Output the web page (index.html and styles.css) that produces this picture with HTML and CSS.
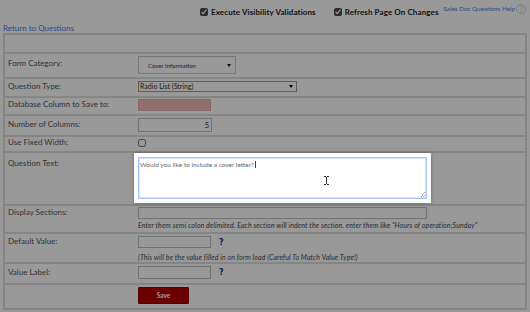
FILE: index.html
```html
<!DOCTYPE html>
<html lang="en">
<head>
<meta charset="utf-8">
<title>Edit Question</title>
<link rel="stylesheet" href="styles.css">
</head>
<body>
<div class="topbar">
  <label class="opt opt-exec"><input class="tick" type="checkbox" checked><span>Execute Visibility Validations</span></label>
  <label class="opt opt-refresh"><input class="tick" type="checkbox" checked><span>Refresh Page On Changes</span></label>
  <a class="help-link" href="#">Sales Doc Questions Help</a>
  <span class="help-icon">?</span>
</div>
<a class="back" href="#">Return to Questions</a>
<div class="form">
  <div class="row head"></div>
  <div class="row r-cat">
    <div class="lbl">Form Category:</div>
    <div class="ctl"><span class="sel sel-cat"><select><option>Cover Information</option></select></span></div>
  </div>
  <div class="row r-type">
    <div class="lbl">Question Type:</div>
    <div class="ctl"><span class="sel sel-type"><select><option>Radio List (String)</option></select></span></div>
  </div>
  <div class="row r-db">
    <div class="lbl">Database Column to Save to:</div>
    <div class="ctl"><input class="inp inp-sm inp-req" type="text"></div>
  </div>
  <div class="row r-num">
    <div class="lbl">Number of Columns:</div>
    <div class="ctl"><input class="inp inp-sm inp-num" type="text" value="5"></div>
  </div>
  <div class="row r-fixed">
    <div class="lbl">Use Fixed Width:</div>
    <div class="ctl"><input class="cb" type="checkbox"></div>
  </div>
  <div class="row r-text">
    <div class="lbl">Question Text:</div>
    <div class="ctl">
      <div class="spot">
        <div class="ta">Would you like to include a cover letter?<span class="caret"></span><svg class="ibeam" width="5" height="9" viewBox="0 0 5 9"><path d="M0 0.5H2M3 0.5H5M2.5 1V8M0 8.5H2M3 8.5H5" stroke="#333" stroke-width="1" fill="none"/></svg></div>
      </div>
    </div>
  </div>
  <div class="row r-disp">
    <div class="lbl">Display Sections:</div>
    <div class="ctl"><input class="inp inp-wide" type="text"></div>
    <div class="note">Enter them semi colon delimited. Each section will indent the section. enter them like "Hours of operation;Sunday"</div>
  </div>
  <div class="row r-def">
    <div class="lbl">Default Value:</div>
    <div class="ctl"><input class="inp inp-sm" type="text"><span class="q">?</span></div>
    <div class="note">(This will be the value filled in on form load (Careful To Match Value Type!)</div>
  </div>
  <div class="row r-lab">
    <div class="lbl">Value Label:</div>
    <div class="ctl"><input class="inp inp-sm inp-tall" type="text"><span class="q">?</span></div>
  </div>
  <div class="row r-save">
    <div class="lbl"></div>
    <div class="ctl"><button class="btn" type="button">Save</button></div>
  </div>
</div>
</body>
</html>
```

FILE: styles.css
```css
* { box-sizing: border-box; }
html, body { margin: 0; padding: 0; }
body {
  width: 530px;
  height: 312px;
  overflow: hidden;
  background: #fff;
  font-family: Lato, "Open Sans", sans-serif;
  color: #555;
}

/* top bar */
.topbar {
  display: flex;
  justify-content: flex-end;
  align-items: center;
  height: 24px;
  padding-right: 4px;
}
.opt {
  display: flex;
  align-items: center;
  gap: 3px;
  font-size: 8px;
  font-weight: 700;
  letter-spacing: 0.1px;
  color: #222;
}
.opt-exec { margin-right: 18px; }
.opt-refresh { margin-right: 5px; }
.tick {
  width: 8px;
  height: 8px;
  margin: 0;
  accent-color: #4a4a4a;
}
.help-link {
  align-self: flex-start;
  margin-top: 5px;
  font-size: 6.3px;
  line-height: 8px;
  color: #4f7cf0;
  text-decoration: none;
  white-space: nowrap;
}
.help-icon {
  align-self: flex-start;
  margin-top: 4px;
  margin-left: 1px;
  width: 10px;
  height: 10px;
  border: 1px solid #cfcfcf;
  border-radius: 50%;
  color: #cfcfcf;
  font-size: 7px;
  font-weight: 700;
  line-height: 8px;
  text-align: center;
}
.back {
  display: block;
  margin: 0 0 1px 3px;
  font-size: 8px;
  line-height: 8px;
  height: 8px;
  color: #4f7cf0;
  text-decoration: none;
}

/* form table */
.form {
  margin: 0 3px;
  border: 2px solid #dedede;
  border-top: 0;
}
.row {
  display: grid;
  grid-template-columns: 133px 1fr;
  align-items: center;
  border-top: 2px solid #dedede;
}
.head { height: 19px; }
.lbl {
  padding-left: 3px;
  padding-bottom: 2px;
  font-size: 8px;
  line-height: 8px;
  color: #555;
  white-space: nowrap;
}
.ctl {
  display: flex;
  align-items: center;
}
.note {
  grid-column: 2;
  font-size: 7px;
  font-style: italic;
  letter-spacing: 0.1px;
  line-height: 8px;
  color: #4a4a4a;
  white-space: nowrap;
}

.r-cat { padding: 2px 0 3px; }
.r-cat .lbl { padding-bottom: 5px; }
.r-type { padding: 2px 0 4px; }
.r-db { padding: 1px 0 3px; }
.r-num { padding: 2px 0 3px; }
.r-fixed { padding: 1px 0 3px; }
.r-text { padding: 0 0 1px; }
.r-text .lbl { align-self: start; padding-top: 6px; }
.r-disp { padding: 1px 0 3px; }
.r-disp .note { margin-top: 2px; }
.r-def { padding: 2px 0 1px; }
.r-def .note { margin-top: 5px; }
.r-lab { padding: 2px 0 4px; }
.r-save { padding: 2px 0 4px; }

/* selects */
.sel { position: relative; display: inline-block; }
.sel select {
  appearance: none;
  -webkit-appearance: none;
  display: block;
  margin: 0;
  background: #fff;
  font-family: Lato, sans-serif;
  color: #333;
  border-radius: 0;
  outline: none;
}
.sel::after {
  content: "";
  position: absolute;
  right: 4px;
  border-left: 2px solid transparent;
  border-right: 2px solid transparent;
  border-top: 3px solid #000;
  pointer-events: none;
}
.sel-cat select {
  width: 98px;
  height: 18px;
  padding: 0 0 0 9px;
  border: 1px solid #c8c8c8;
  font-size: 6px;
}
.sel-cat::after { top: 8px; right: 5px; }
.sel-type select {
  width: 159px;
  height: 11px;
  padding: 0 0 0 1px;
  border: 1px solid #9a9a9a;
  font-size: 7px;
  line-height: 9px;
}
.sel-type::after { top: 4px; }

/* inputs */
.inp {
  display: block;
  margin: 0;
  height: 12px;
  padding: 0 2px;
  border: 1px solid #bcbcbc;
  border-radius: 0;
  background: #fff;
  font-family: Lato, sans-serif;
  font-size: 7px;
  color: #333;
}
.inp-sm { width: 73px; }
.inp-wide { width: 289px; }
.inp-tall { height: 13px; }
.inp-req { background: #f3b9b9; border-color: #e9aaaa; }
.inp-num {
  width: 74px;
  height: 14px;
  text-align: right;
  padding-right: 2px;
  font-size: 7.5px;
}
.cb {
  width: 8px;
  height: 8px;
  margin: 0;
}
.q {
  margin-left: 8px;
  font-family: "DejaVu Sans", sans-serif;
  font-weight: 700;
  font-size: 8px;
  color: #2a2a8c;
}

/* highlighted question text */
.spot {
  position: relative;
  z-index: 1;
  margin-left: -4px;
  padding: 4px;
  background: #fff;
  box-shadow: 0 0 3px rgba(0, 0, 0, 0.35), 0 0 0 1200px rgba(0, 0, 0, 0.4);
}
.ta {
  position: relative;
  width: 289px;
  height: 42px;
  padding: 2px 1px;
  border: 1px solid #a7c6f7;
  box-shadow: inset 0 0 0 1px #d6e4fb;
  background: #fff;
  font-size: 6.5px;
  line-height: 9px;
  color: #666;
}
.ta::after {
  content: "";
  position: absolute;
  right: 1px;
  bottom: 1px;
  width: 5px;
  height: 5px;
  background: linear-gradient(135deg, transparent 0 50%, #aaa 50% 60%, transparent 60% 75%, #aaa 75% 85%, transparent 85%);
}
.caret {
  display: inline-block;
  width: 1px;
  height: 7px;
  margin-left: 1px;
  vertical-align: -1px;
  background: #444;
}
.ibeam {
  position: absolute;
  left: 185px;
  top: 18px;
}

/* save */
.btn {
  width: 51px;
  height: 17px;
  margin: 0;
  padding: 0;
  border: 1px solid #8c0000;
  border-radius: 1px;
  background: #b40000;
  color: #fff;
  font-family: Lato, sans-serif;
  font-size: 6.5px;
  font-weight: 700;
}
```
